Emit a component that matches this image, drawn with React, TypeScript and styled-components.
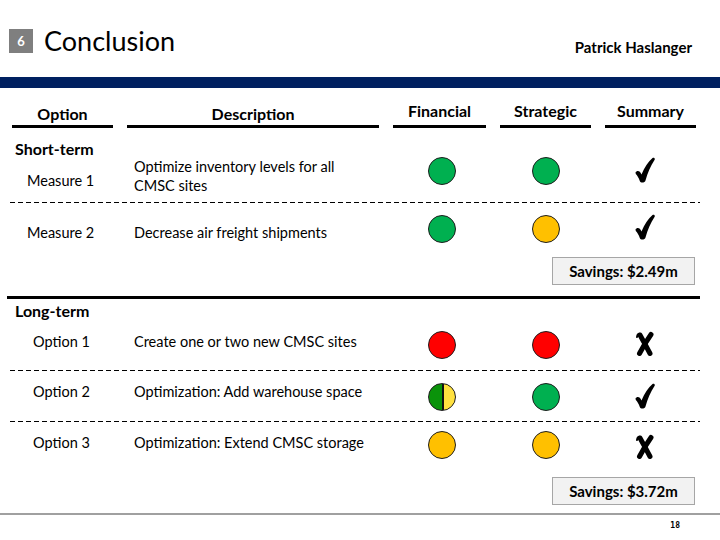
import styled, { createGlobalStyle } from "styled-components";

const GlobalStyle = createGlobalStyle`
  body {
    margin: 0;
    background: #ffffff;
  }
`;

const Page = styled.div`
  width: 720px;
  height: 540px;
  overflow: hidden;
  background: #ffffff;
  color: #000000;
  font-family: Lato, "Open Sans", "Liberation Sans", sans-serif;
  display: flex;
  flex-direction: column;
`;

const Header = styled.header`
  height: 77px;
  box-sizing: border-box;
  padding: 29px 28px 0 9px;
  display: flex;
  align-items: flex-start;
`;

const Badge = styled.div`
  width: 24px;
  height: 24px;
  background: #7f7f7f;
  color: #ffffff;
  font-size: 13px;
  font-weight: 700;
  display: flex;
  align-items: center;
  justify-content: center;
`;

const Title = styled.h1`
  margin: 0 0 0 11px;
  font-size: 27px;
  line-height: 24px;
  font-weight: 400;
`;

const Author = styled.div`
  margin: 9px 0 0 auto;
  font-size: 15px;
  line-height: 18px;
  font-weight: 700;
`;

const NavBar = styled.div`
  height: 11px;
  background: #002060;
`;

const Grid = styled.div`
  display: grid;
  grid-template-columns: 101px 252px 93px 91px 91px;
  column-gap: 14px;
  padding-left: 12px;
`;

const HeadRow = styled(Grid)`
  height: 40px;
  align-items: end;
`;

const HeadCell = styled.div<{ $raised?: boolean }>`
  text-align: center;
  font-size: 16px;
  line-height: 18px;
  font-weight: 700;
  padding-bottom: ${(p) => (p.$raised ? 5 : 2)}px;
  border-bottom: 3px solid #000000;
`;

const GroupTitle = styled.div<{ $top: number; $height: number }>`
  height: ${(p) => p.$height}px;
  box-sizing: border-box;
  padding: ${(p) => p.$top}px 0 0 15px;
  font-size: 16px;
  line-height: 18px;
  font-weight: 700;
`;

const Row = styled(Grid)<{ $height: number }>`
  height: ${(p) => p.$height}px;
  align-items: start;
`;

const Label = styled.div<{ $indent: number; $top: number }>`
  padding: ${(p) => p.$top}px 0 0 ${(p) => p.$indent}px;
  font-size: 14.5px;
  line-height: 19px;
`;

const Desc = styled.div<{ $top: number }>`
  padding: ${(p) => p.$top}px 0 0 7px;
  font-size: 14.5px;
  line-height: 19px;
`;

const Cell = styled.div<{ $top: number; $shift?: number }>`
  display: flex;
  justify-content: center;
  padding-top: ${(p) => p.$top}px;
  padding-left: ${(p) => Math.max(p.$shift ?? 0, 0)}px;
  padding-right: ${(p) => Math.max(-(p.$shift ?? 0), 0)}px;
`;

const Dot = styled.div<{ $color: string }>`
  width: 28px;
  height: 28px;
  box-sizing: border-box;
  border-radius: 50%;
  border: 1px solid #1e1e1e;
  background: ${(p) => p.$color};
`;

const HalfDot = styled(Dot)`
  background: linear-gradient(
    to right,
    #0a930a 0,
    #0a930a 12.5px,
    #111111 12.5px,
    #111111 14.5px,
    #ffe13f 14.5px
  );
`;

const Dashed = styled.div`
  height: 1px;
  margin-left: 10px;
  width: 690px;
  background-image: repeating-linear-gradient(
    to right,
    #000000 0,
    #000000 5px,
    transparent 5px,
    transparent 8px
  );
`;

const ThickRule = styled.div<{ $top: number }>`
  height: 3px;
  margin: ${(p) => p.$top}px 0 0 7px;
  width: 693px;
  background: #000000;
`;

const Savings = styled.div<{ $top: number }>`
  align-self: flex-end;
  margin: ${(p) => p.$top}px 25px 0 0;
  width: 143px;
  height: 28px;
  box-sizing: border-box;
  background: #f2f2f2;
  border: 1px solid #a6a6a6;
  display: flex;
  align-items: center;
  justify-content: center;
  font-size: 15px;
  font-weight: 700;
`;

const Footer = styled.footer<{ $top: number }>`
  margin-top: ${(p) => p.$top}px;
  border-top: 2px solid #a0a0a0;
  display: flex;
  justify-content: flex-end;
  padding: 6px 40px 0 0;
`;

const PageNo = styled.span`
  font-family: "DejaVu Sans Mono", monospace;
  font-size: 8px;
  font-weight: 700;
`;

const Check = () => (
  <svg width="20" height="26" viewBox="0 0 20 26">
    <path
      d="M0.5 15.5 C2 13 5 13.5 6.5 17.5 C9.5 10 13.5 4.5 17.5 1 C19 0 20.5 1.5 19.5 3 C15.5 9 12.5 16 10.5 23.5 C9.8 26 5.5 26.2 4.8 24 C3.8 21 2.3 18.5 0.8 17 Z"
      fill="#000000"
    />
  </svg>
);

const Cross = () => (
  <svg width="20" height="26" viewBox="0 0 20 26">
    <g stroke="#000000" strokeLinecap="round" fill="none">
      <path d="M5 4 Q9.5 12 15 22.5" strokeWidth="5" />
      <path d="M16 3.5 Q10 12 4.5 22.5" strokeWidth="5" />
      <path d="M2 6 Q2.5 2 5.5 3" strokeWidth="2" />
    </g>
  </svg>
);

type Mark = "check" | "cross";
type Light = "green" | "orange" | "red" | "half";

const colors: Record<Exclude<Light, "half">, string> = {
  green: "#00b050",
  orange: "#ffc000",
  red: "#ff0000",
};

const Lamp = ({ light }: { light: Light }) =>
  light === "half" ? <HalfDot $color="#ffe13f" /> : <Dot $color={colors[light]} />;

interface Item {
  label: string;
  desc: string[];
  financial: Light;
  strategic: Light;
  summary: Mark;
  height: number;
  labelTop: number;
  descTop: number;
  dotTop: number;
  markTop: number;
}

const shortTerm: Item[] = [
  {
    label: "Measure 1",
    desc: ["Optimize inventory levels for all", "CMSC sites"],
    financial: "green",
    strategic: "green",
    summary: "check",
    height: 45,
    labelTop: 14,
    descTop: 0,
    dotTop: 0,
    markTop: 0,
  },
  {
    label: "Measure 2",
    desc: ["Decrease air freight shipments"],
    financial: "green",
    strategic: "orange",
    summary: "check",
    height: 47,
    labelTop: 20,
    descTop: 20,
    dotTop: 12,
    markTop: 11,
  },
];

const longTerm: Item[] = [
  {
    label: "Option 1",
    desc: ["Create one or two new CMSC sites"],
    financial: "red",
    strategic: "red",
    summary: "cross",
    height: 51,
    labelTop: 13,
    descTop: 13,
    dotTop: 12,
    markTop: 12,
  },
  {
    label: "Option 2",
    desc: ["Optimization: Add warehouse space"],
    financial: "half",
    strategic: "green",
    summary: "check",
    height: 50,
    labelTop: 11,
    descTop: 11,
    dotTop: 12,
    markTop: 12,
  },
  {
    label: "Option 3",
    desc: ["Optimization: Extend CMSC storage"],
    financial: "orange",
    strategic: "orange",
    summary: "cross",
    height: 45,
    labelTop: 11,
    descTop: 11,
    dotTop: 9,
    markTop: 12,
  },
];

const ItemRow = ({ item, indent }: { item: Item; indent: number }) => (
  <Row $height={item.height}>
    <Label $indent={indent} $top={item.labelTop}>
      {item.label}
    </Label>
    <Desc $top={item.descTop}>
      {item.desc.map((line) => (
        <div key={line}>{line}</div>
      ))}
    </Desc>
    <Cell $top={item.dotTop} $shift={4}>
      <Lamp light={item.financial} />
    </Cell>
    <Cell $top={item.dotTop}>
      <Lamp light={item.strategic} />
    </Cell>
    <Cell $top={item.markTop} $shift={-12}>
      {item.summary === "check" ? <Check /> : <Cross />}
    </Cell>
  </Row>
);

const App = () => {
  return (
    <>
      <GlobalStyle />
      <Page>
        <Header>
          <Badge>6</Badge>
          <Title>Conclusion</Title>
          <Author>Patrick Haslanger</Author>
        </Header>
        <NavBar />

        <HeadRow>
          <HeadCell>Option</HeadCell>
          <HeadCell>Description</HeadCell>
          <HeadCell $raised>Financial</HeadCell>
          <HeadCell $raised>Strategic</HeadCell>
          <HeadCell $raised>Summary</HeadCell>
        </HeadRow>

        <GroupTitle $top={12} $height={29}>
          Short-term
        </GroupTitle>
        <ItemRow item={shortTerm[0]} indent={15} />
        <Dashed />
        <ItemRow item={shortTerm[1]} indent={15} />
        <Savings $top={7}>Savings: $2.49m</Savings>

        <ThickRule $top={11} />
        <GroupTitle $top={3} $height={20}>
          Long-term
        </GroupTitle>
        <ItemRow item={longTerm[0]} indent={21} />
        <Dashed />
        <ItemRow item={longTerm[1]} indent={21} />
        <Dashed />
        <ItemRow item={longTerm[2]} indent={21} />
        <Savings $top={10}>Savings: $3.72m</Savings>

        <Footer $top={8}>
          <PageNo>18</PageNo>
        </Footer>
      </Page>
    </>
  );
};

export default App;
